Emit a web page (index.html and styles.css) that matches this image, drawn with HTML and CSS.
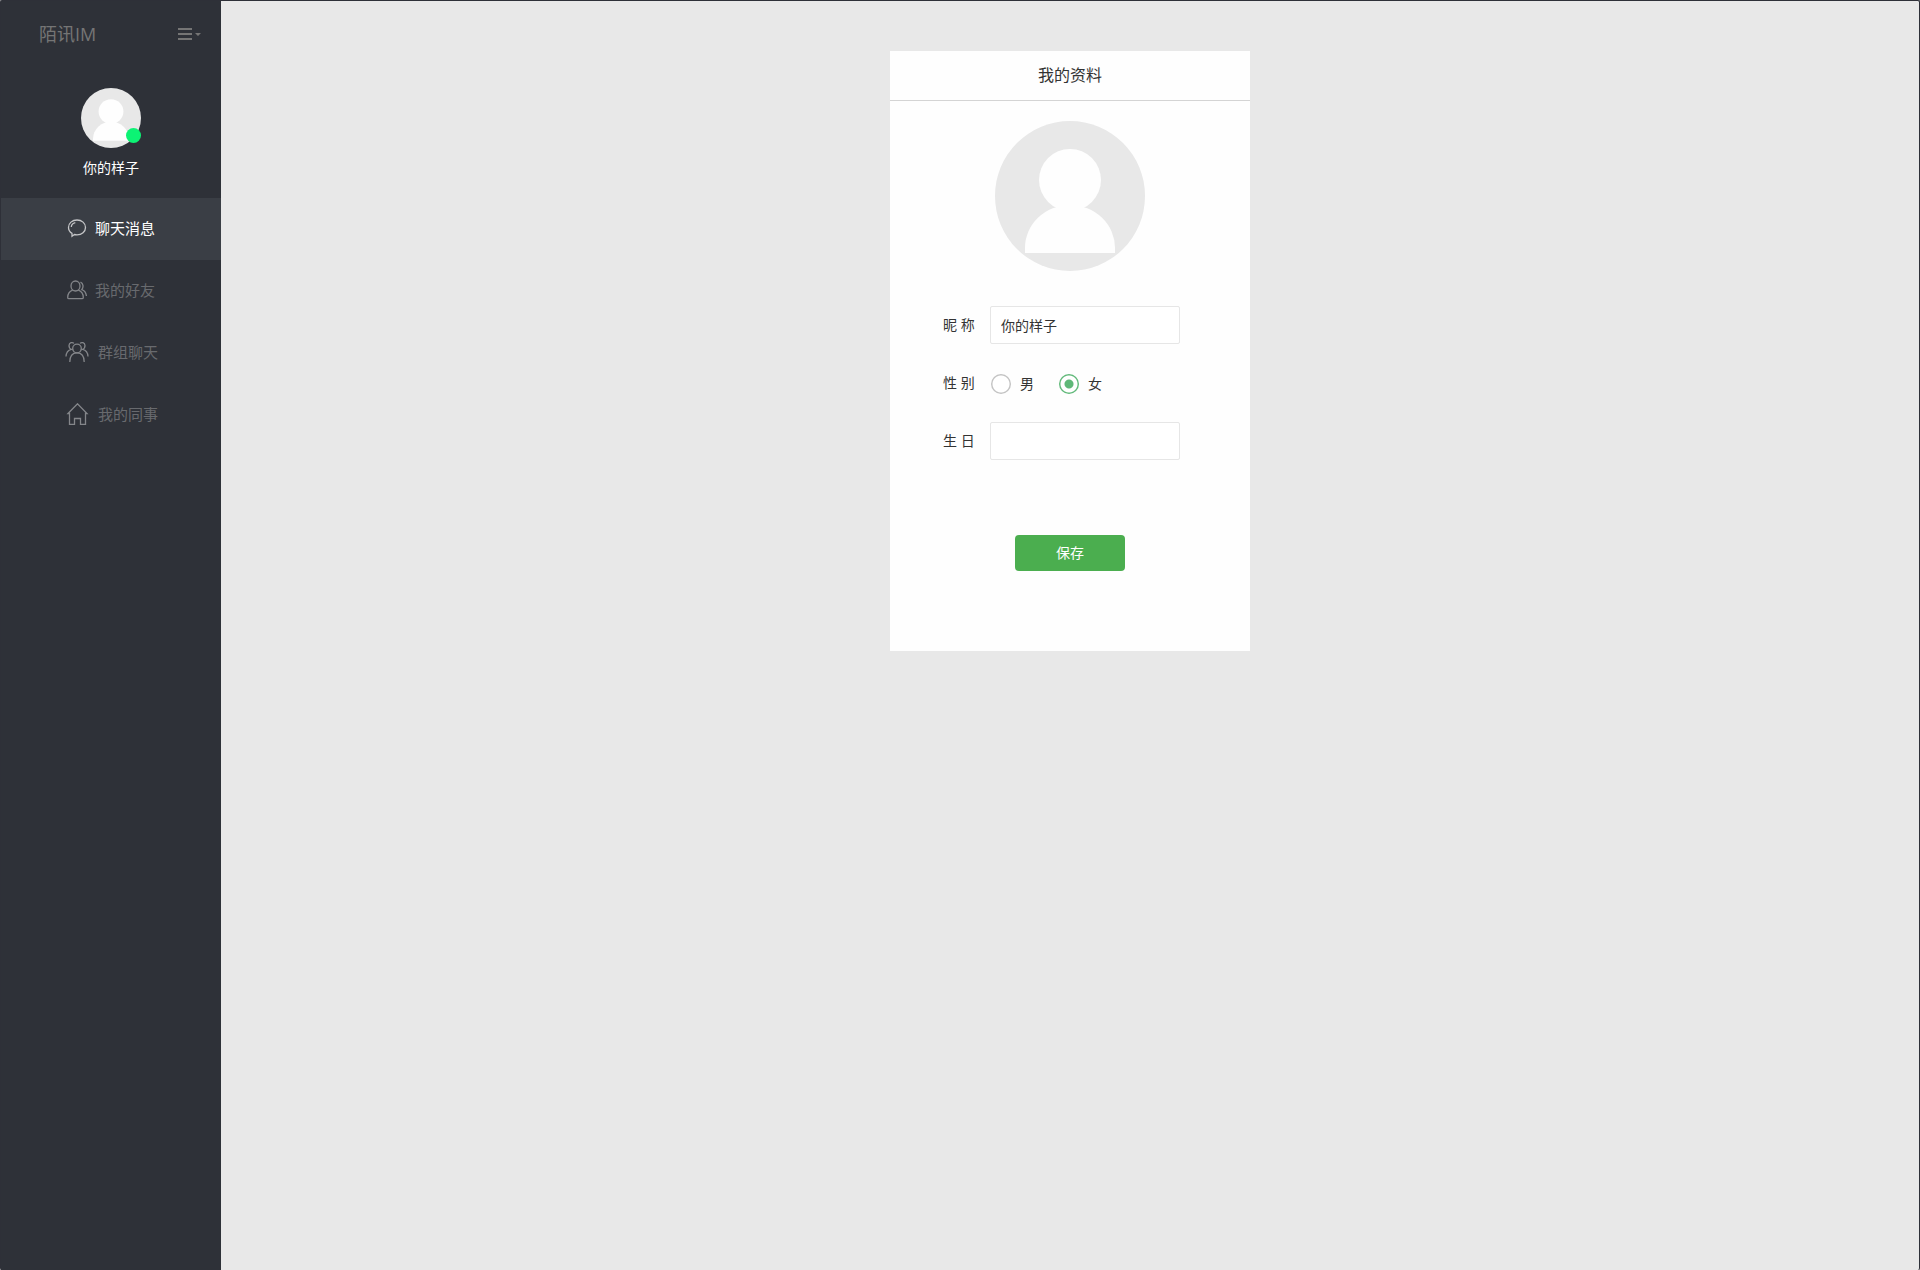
FILE: index.html
```html
<!DOCTYPE html>
<html lang="zh-CN">
<head>
    <meta charset="UTF-8">
    <meta name="viewport" content="width=device-width, initial-scale=1.0">
    <title>陌讯IM</title>
    <link rel="stylesheet" href="styles.css">
</head>
<body>
    <div class="app">
        <aside class="sidebar">
            <div class="brand">
                <span>陌讯IM</span>
                <button type="button" class="menu-btn" aria-label="菜单">
                    <svg width="23" height="12" viewBox="0 0 23 12">
                        <path d="M0 0h14v2H0zM0 5h14v2H0zM0 10h14v2H0zM17 5h6l-3 3z" fill="currentColor"/>
                    </svg>
                </button>
            </div>

            <div class="user">
                <div class="user-avatar">
                    <svg width="60" height="60" viewBox="0 0 150 150">
                        <circle cx="75" cy="75" r="75" fill="#e8e8e8"/>
                        <circle cx="75" cy="59" r="31" fill="#fefefe"/>
                        <path d="M30 132V127A45 43 0 0 1 120 127V132Z" fill="#fefefe"/>
                    </svg>
                    <span class="status"></span>
                </div>
                <div class="user-name">你的样子</div>
            </div>

            <nav class="nav">
                <a href="#" class="nav-item active">
                    <svg width="20" height="20" viewBox="0 0 20 20">
                        <path d="M5 15.4C2.8 13.9 1.500 11.800 1.500 9.400C1.500 5.200 5.200 2 10 2s8.500 3.200 8.500 7.400s-3.700 7.400-8.500 7.400c-1 0-1.700-.1-2.500-.3L5 18.200z"/>
                        <path d="M4.300 9C4.500 6.800 6 5.200 8.300 4.700"/>
                    </svg>
                    <span>聊天消息</span>
                </a>
                <a href="#" class="nav-item">
                    <svg width="20" height="20" viewBox="0 0 20 20">
                        <ellipse cx="8.500" cy="6" rx="4.500" ry="5"/>
                        <path d="M5.700 10.200C2.500 11.500.7 14 .7 17.400q0 1.300 1.300 1.300h13q1.300 0 1.300-1.300c0-3.400-1.800-5.900-5-7.200"/>
                        <path d="M13.500 2.200c2.800 1.300 3.300 4.900 1.300 7.500c2.400.8 4.200 2.800 4.600 6.300"/>
                    </svg>
                    <span>我的好友</span>
                </a>
                <a href="#" class="nav-item">
                    <svg width="26" height="22" viewBox="0 0 26 22">
                        <circle cx="13" cy="7.500" r="4.300"/>
                        <path d="M5.800 21C5.800 15.500 8.400 11.800 13 11.800s7.200 3.700 7.200 9.200"/>
                        <path d="M10 2.400C8.500.9 5.200 1.400 5 4.600c0 1.800.7 3.200 2.300 3.700C4.200 9 2.200 11.500 2 15.500"/>
                        <path d="M16 2.400C17.500.9 20.800 1.400 21 4.600c0 1.800-.7 3.200-2.300 3.700C21.800 9 23.800 11.500 24 15.500"/>
                    </svg>
                    <span>群组聊天</span>
                </a>
                <a href="#" class="nav-item">
                    <svg width="26" height="22" viewBox="0 0 26 22">
                        <path d="M4 10.500L13.500 .8L23 10.500H21.500V21.500H16.500V15.500H10.500V21.500H5.500V10.500Z"/>
                    </svg>
                    <span>我的同事</span>
                </a>
            </nav>
        </aside>

        <main class="main">
            <section class="card">
                <h2 class="card-title">我的资料</h2>
                <form class="profile" id="profileForm">
                    <svg class="profile-avatar" width="150" height="150" viewBox="0 0 150 150">
                        <circle cx="75" cy="75" r="75" fill="#e8e8e8"/>
                        <circle cx="75" cy="59" r="31" fill="#fefefe"/>
                        <path d="M30 132V127A45 43 0 0 1 120 127V132Z" fill="#fefefe"/>
                    </svg>

                    <div class="form-group">
                        <label class="label" for="nickname">昵 称</label>
                        <input type="text" class="text-input" id="nickname" name="nickname" value="你的样子">
                    </div>
                    <div class="form-group" role="radiogroup" aria-labelledby="genderLabel">
                        <span class="label" id="genderLabel">性 别</span>
                        <label class="radio"><input type="radio" name="gender" value="male">男</label>
                        <label class="radio"><input type="radio" name="gender" value="female" checked>女</label>
                    </div>
                    <div class="form-group">
                        <label class="label" for="birthday">生 日</label>
                        <input type="text" class="text-input" id="birthday" name="birthday">
                    </div>

                    <button type="button" class="save-btn">保存</button>
                </form>
            </section>
        </main>
    </div>
</body>
</html>
```

FILE: styles.css
```css
* { box-sizing: border-box; }

body {
    margin: 0;
    background: #aaa;
    color: #333;
    font-family: "Open Sans", "Noto Sans CJK SC", sans-serif;
    font-size: 14px;
    line-height: 20px;
}

input, button { font: inherit; color: inherit; }

.app {
    display: flex;
    min-height: 100vh;
    border: 1px solid #2e3038;
    border-bottom: 0;
    border-radius: 2px;
    background: #e8e8e8;
}

/* sidebar */
.sidebar {
    flex: none;
    width: 220px;
    background: #2e3138;
    color: #757575;
}

.brand {
    display: flex;
    align-items: center;
    justify-content: space-between;
    padding: 20px 20px 20px 38px;
    font-size: 18px;
    line-height: 26px;
}

.menu-btn {
    display: flex;
    padding: 0;
    border: 0;
    background: none;
    cursor: pointer;
}

.user {
    display: flex;
    flex-direction: column;
    align-items: center;
    gap: 10px;
    padding: 21px 0 20px;
    color: #fff;
}

.user-avatar {
    position: relative;
    height: 60px;
}

.status {
    position: absolute;
    right: 0;
    bottom: 5px;
    width: 15px;
    height: 15px;
    border-radius: 50%;
    background: #0cf374;
}

.nav-item {
    display: flex;
    align-items: center;
    justify-content: center;
    gap: 8px;
    height: 62px;
    padding-bottom: 2px;
    color: #686a6e;
    font-size: 15px;
    text-decoration: none;
}

.nav-item svg {
    fill: none;
    stroke: #84868a;
    stroke-width: 1.3;
}

.nav-item.active {
    background: #3a3e45;
    color: #fff;
}

.nav-item.active svg { stroke: #c4c5c7; }

/* profile card */
.main {
    flex: 1;
    padding: 50px 20px;
}

.card {
    max-width: 360px;
    min-height: 600px;
    margin: 0 auto;
    background: #fefefe;
}

.card-title {
    margin: 0;
    padding: 12px 0 13px;
    border-bottom: 1px solid #d4d4d4;
    font-size: 16px;
    font-weight: 400;
    line-height: 24px;
    text-align: center;
}

.profile {
    display: flex;
    flex-direction: column;
    gap: 20px;
    padding: 20px 70px 0 53px;
}

.profile-avatar {
    align-self: center;
    margin: 0 0 15px 17px;
}

.form-group {
    display: flex;
    align-items: center;
    height: 38px;
}

.label {
    flex: none;
    width: 47px;
}

.text-input {
    flex: 1;
    min-width: 0;
    height: 38px;
    padding: 0 10px;
    border: 1px solid #e6e6e6;
    border-radius: 2px;
    background: #fff;
}

.radio {
    display: flex;
    align-items: center;
    gap: 9px;
    margin-right: 24px;
    padding-top: 2px;
}

/* ring and dot are drawn as a gradient */
.radio input {
    appearance: none;
    width: 20px;
    height: 20px;
    margin: 0 0 0 1px;
    border-radius: 50%;
    background: radial-gradient(circle, #fff 8px, #c2c2c2 9px);
}

.radio input:checked {
    background: radial-gradient(circle, #5fb878 4px, #fff 5px, #fff 8px, #5fb878 9px);
}

.save-btn {
    align-self: center;
    width: 110px;
    height: 36px;
    margin: 55px 0 0 17px;
    border: 0;
    border-radius: 4px;
    background: #4bae4f;
    color: #fff;
    cursor: pointer;
}
```
